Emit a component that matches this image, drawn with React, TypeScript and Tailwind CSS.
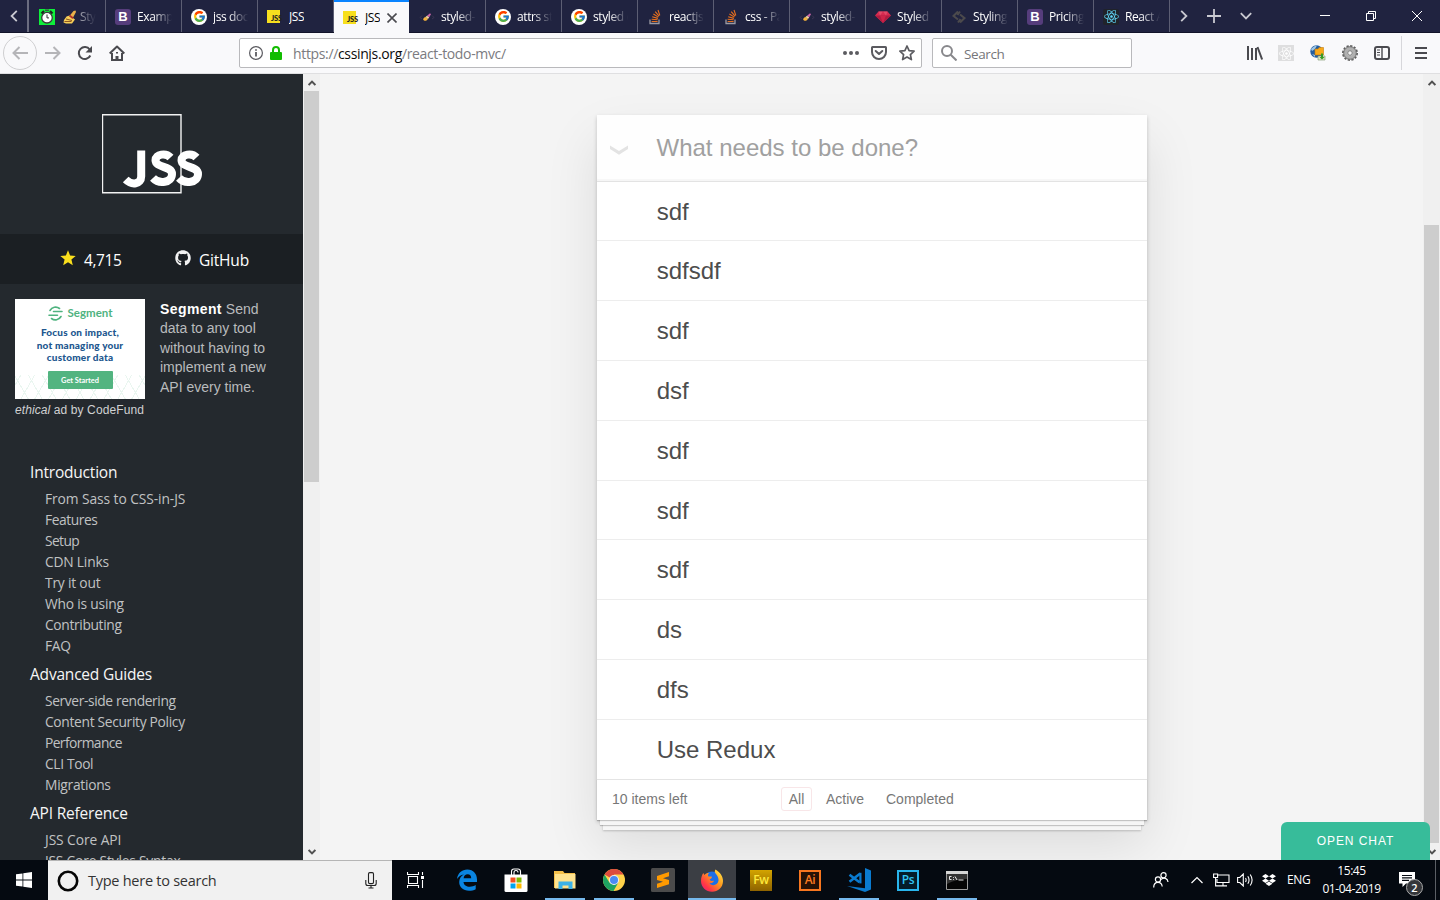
import type { ReactNode } from "react";
import { FaDropbox, FaGithub, FaReact } from "react-icons/fa";
import { FcGoogle } from "react-icons/fc";

const SEGOE = "font-['Open_Sans','Noto_Sans',sans-serif]";
const ARIAL = "font-['Liberation_Sans',Arial,sans-serif]";

/* ---------- favicons ---------- */

const Bootstrap = () => (
  <span className="flex size-4 items-center justify-center rounded-[3px] bg-[#563d7c] font-['Liberation_Sans',sans-serif] text-[13px] font-bold leading-none text-white">
    B
  </span>
);

const Google = () => (
  <span className="flex size-4 items-center justify-center rounded-full bg-white">
    <FcGoogle size={13} />
  </span>
);

const JssIcon = () => (
  <span className="flex h-[13px] w-4 items-end">
    <span className="flex h-[13px] w-[13px] items-end bg-[#f7df1e] pl-[4px] font-['Lato','Liberation_Sans',sans-serif] text-[7.500px] font-black leading-[9px] tracking-[-0.200px] text-[#222]">
      JSS
    </span>
  </span>
);

const StackOverflow = () => (
  <svg width="16" height="16" viewBox="0 0 16 16" fill="none">
    <path d="M3 10.500V14.500H12V10.500" stroke="#9a9aa4" strokeWidth="1.300" />
    <path d="M4.600 12.500h6M4.600 10.300l6 .5M5.200 7.800l5.700 1.600M6.400 5l5 3.100M8.200 2.600l3.900 4.500M11 1l1.800 5.400" stroke="#e8701e" strokeWidth="1.100" />
  </svg>
);

const StyledComp = () => (
  <svg width="16" height="16" viewBox="0 0 16 16" fill="none">
    <path d="M3 6.500 1 8.500l2 1.500M13 6.500l2 2-2 1.500" stroke="#3a3550" strokeWidth="1" />
    <path d="M6.500 8l2.500 2-1.500 1.500c-1.300.6-3.300.2-3.300-1.200C4.200 9.300 5.500 8.300 6.500 8z" fill="#f3b33c" />
    <path d="M6.500 8l1.500-1.200 2.200 1.500L9 10z" fill="#f5d9a0" />
    <path d="M8 6.800 11 4.200l1 1-1.800 3.100z" fill="#c965a9" />
  </svg>
);

const Gem = () => (
  <svg width="16" height="16" viewBox="0 0 16 16">
    <path d="M3.500 2.500h9L16 6.500 8 14 0 6.500z" fill="#d72b50" />
    <path d="M0 6.500h16L8 14z" fill="#b01c40" />
    <path d="M5 6.500h6L8 14z" fill="#cf2449" />
    <path d="M3.500 2.500 5 6.500 8 2.500l3 4 1.500-4z" fill="#e04a68" />
  </svg>
);

const StylingIcon = () => (
  <svg width="16" height="16" viewBox="0 0 16 16" fill="none" stroke="#4c4a4c" strokeWidth="2">
    <path d="M7 2.500 2.500 7 7 10.500M9 5.500l4.500 3.500L9 13.500M9 2.500 6.500 6M9.500 10 7 13.500" />
  </svg>
);

const Clock = () => (
  <svg width="16" height="16" viewBox="0 0 16 16">
    <rect width="16" height="16" fill="#0ef03a" />
    <path d="M2.500 4.500 5 2M13.500 4.500 11 2" stroke="#222" strokeWidth="2.200" />
    <path d="M6 1.200h4" stroke="#444" strokeWidth="1.400" />
    <circle cx="8" cy="8.700" r="5.300" fill="#fff" stroke="#3b3b3b" strokeWidth="1.300" />
    <path d="M8 5.500v3.400h2" stroke="#333" fill="none" />
  </svg>
);

const Brush = () => (
  <svg width="14" height="14" viewBox="0 0 14 14">
    <path d="M6 6.500 10.500 1 12.500.5 13 2 9.500 8.500z" fill="#e9b04a" />
    <path d="M6.500 5.500 3.500 6.500 1 10l-.5 2.500 2.500 1h6L12 9.500 10 8z" fill="#f7cf58" />
    <path d="M1.500 11.500h7M3 9l6 1.500" stroke="#8d5720" />
    <path d="M6.500 5.500 10 8.300" stroke="#b0302a" strokeWidth="1.800" />
  </svg>
);

const ReactFav = () => (
  <span className="flex size-4 items-center justify-center rounded-[2px] bg-[#20232a]">
    <FaReact size={15} color="#61dafb" />
  </span>
);

type TabInfo = { icon: ReactNode; title: string; active?: boolean; fade?: boolean };

const tabs: TabInfo[] = [
  { icon: <Clock />, title: "Styled", fade: true },
  { icon: <Bootstrap />, title: "Examples", fade: true },
  { icon: <Google />, title: "jss docs", fade: true },
  { icon: <JssIcon />, title: "JSS" },
  { icon: <JssIcon />, title: "JSS", active: true },
  { icon: <StyledComp />, title: "styled-c", fade: true },
  { icon: <Google />, title: "attrs sty", fade: true },
  { icon: <Google />, title: "styled c", fade: true },
  { icon: <StackOverflow />, title: "reactjs -", fade: true },
  { icon: <StackOverflow />, title: "css - Pa", fade: true },
  { icon: <StyledComp />, title: "styled-c", fade: true },
  { icon: <Gem />, title: "Styled C", fade: true },
  { icon: <StylingIcon />, title: "Styling", fade: true },
  { icon: <Bootstrap />, title: "Pricing", fade: true },
  { icon: <ReactFav />, title: "React Ap", fade: true },
];

function TabStrip() {
  return (
    <div className="flex h-[33px] shrink-0 border-b border-[#12142a] bg-[#202340]">
      <div className="flex w-[28px] shrink-0 items-center justify-center border-r border-[#6b6d80]">
        <svg width="8" height="12" viewBox="0 0 8 12" fill="none" stroke="#c9c9d1" strokeWidth="1.800">
          <path d="M6.800.8 1.600 6l5.200 5.200" />
        </svg>
      </div>
      <div className="flex w-[1142px] shrink-0 border-l border-[#6b6d80] pl-px">
        {tabs.map((t, i) => (
          <div
            key={i}
            className={
              t.active
                ? "flex h-[33px] w-[75px] shrink-0 items-center border-t-2 border-t-[#0a84ff] bg-[#f9f9fb] pl-[9px] text-black"
                : i === 5
                  ? "flex w-[77px] shrink-0 items-center border-r border-[#5c5e73] pl-[10px] pt-px text-white"
                  : "flex w-[76px] shrink-0 items-center border-r border-[#5c5e73] pl-[9px] pt-px text-white"
            }
          >
            <span className="flex size-4 shrink-0 items-center">{t.icon}</span>
            {i === 0 && (
              <span className="ml-2 shrink-0">
                <Brush />
              </span>
            )}
            <span
              className={
                (i === 0
                  ? "ml-[3px] w-4 [mask-image:linear-gradient(to_right,#0009,transparent)] "
                  : t.fade
                    ? "ml-[6px] w-[35px] [mask-image:linear-gradient(to_right,black_45%,transparent)] "
                    : "ml-[6px] ") + "overflow-hidden whitespace-nowrap pt-px text-[12px] leading-4 tracking-[-0.400px]"
              }
            >
              {t.title}
            </span>
            {t.active && (
              <svg className="ml-[7px] shrink-0" width="10" height="10" viewBox="0 0 10 10" stroke="#4a4a4f" strokeWidth="1.600">
                <path d="M.5.500l9 9M9.500.500l-9 9" />
              </svg>
            )}
          </div>
        ))}
      </div>
      <div className="flex flex-1 items-center text-[#c9c9d1]">
        <svg className="ml-[10px]" width="8" height="12" viewBox="0 0 8 12" fill="none" stroke="currentColor" strokeWidth="1.800">
          <path d="M1.200.8 6.400 6l-5.200 5.200" />
        </svg>
        <svg className="ml-[19px]" width="14" height="14" viewBox="0 0 14 14" stroke="currentColor" strokeWidth="1.800">
          <path d="M7 0v14M0 7h14" />
        </svg>
        <svg className="ml-[19px]" width="12" height="8" viewBox="0 0 12 8" fill="none" stroke="currentColor" strokeWidth="1.800">
          <path d="M.8 1.200 6 6.400l5.200-5.200" />
        </svg>
        <svg className="ml-[68px]" width="10" height="10" viewBox="0 0 10 10" stroke="#fff">
          <path d="M0 4.500h10" />
        </svg>
        <svg className="ml-[36px]" width="10" height="10" viewBox="0 0 10 10" fill="none" stroke="#fff">
          <path d="M.5 2.500h7v7h-7zM2.500 2.500v-2h7v7h-2" />
        </svg>
        <svg className="ml-[36px]" width="10" height="10" viewBox="0 0 10 10" stroke="#fff">
          <path d="M0 0l10 10M10 0 0 10" />
        </svg>
      </div>
    </div>
  );
}

function Toolbar() {
  return (
    <div className="flex h-[41px] shrink-0 items-center border-b border-[#dfdfe1] bg-[#f9f9fb] text-[#4a4a4f]">
      <div className="ml-[3px] flex size-[34px] items-center justify-center rounded-full border border-[#cfcfd1] text-[#b5b5b8]">
        <svg width="16" height="14" viewBox="0 0 16 14" fill="none" stroke="currentColor" strokeWidth="2">
          <path d="M7.500 1 1.500 7l6 6M1.500 7H16" />
        </svg>
      </div>
      <svg className="ml-[8px] text-[#b5b5b8]" width="16" height="14" viewBox="0 0 16 14" fill="none" stroke="currentColor" strokeWidth="2">
        <path d="M8.500 1l6 6-6 6M14.500 7H0" />
      </svg>
      <svg className="ml-[16px]" width="16" height="16" viewBox="0 0 16 16" fill="none" stroke="currentColor" strokeWidth="2">
        <path d="M12.700 4.500A6 6 0 1 0 13.300 10.500" />
        <path d="M15 1v6.500H8.500z" fill="currentColor" stroke="none" />
      </svg>
      <svg className="ml-[16px]" width="16" height="16" viewBox="0 0 16 16" fill="none" stroke="currentColor" strokeWidth="2">
        <path d="M.7 8.500 8 1.500l7.300 7" strokeLinejoin="round" />
        <path d="M3 8v7h10V8" />
        <path d="M6.500 15.500v-4.500h3v4.500zM7 7h2v1.500H7z" fill="currentColor" stroke="none" />
      </svg>
      <div className="ml-[114px] flex h-[30px] w-[683px] items-center rounded-[2px] border border-[#b9b9bc] bg-white">
        <svg className="ml-[9px]" width="14" height="14" viewBox="0 0 14 14" fill="none" stroke="#5b5b60" strokeWidth="1.200">
          <circle cx="7" cy="7" r="6.400" />
          <path d="M7 6v4.500M7 3.200v1.600" strokeWidth="1.800" />
        </svg>
        <svg className="ml-[7px]" width="12" height="14" viewBox="0 0 12 14">
          <rect y="6" width="12" height="8" rx="1" fill="#12bc00" />
          <path d="M3 7V4a3 3 0 0 1 6 0v3" fill="none" stroke="#12bc00" strokeWidth="2" />
        </svg>
        <span className="ml-[11px] w-[549px] pt-[2px] text-[14px] leading-5 tracking-[-0.350px] text-[#7b7b80]">
          https://<span className="text-[#0c0c0d]">cssinjs.org</span>/react-todo-mvc/
        </span>
        <svg className="ml-px" width="16" height="4" viewBox="0 0 16 4" fill="#5b5b60">
          <circle cx="2" cy="2" r="2" />
          <circle cx="8" cy="2" r="2" />
          <circle cx="14" cy="2" r="2" />
        </svg>
        <svg className="ml-[12px]" width="16" height="14" viewBox="0 0 16 14" fill="none" stroke="#5b5b60" strokeWidth="2" strokeLinecap="round" strokeLinejoin="round">
          <path d="M1.500 1h13q.5 0 .5.500V6A7 7 0 0 1 1 6V1.500Q1 1 1.500 1z" />
          <path d="M4.700 5 8 8l3.300-3" />
        </svg>
        <svg className="ml-[12px]" width="16" height="16" viewBox="0 0 16 16" fill="none" stroke="#5b5b60" strokeWidth="1.700" strokeLinejoin="round">
          <path d="M8 1l2.100 4.600 5 .6-3.700 3.400 1 5L8 12.100l-4.400 2.500 1-5L.9 6.200l5-.6z" />
        </svg>
      </div>
      <div className="ml-[10px] flex h-[30px] w-[200px] items-center rounded-[2px] border border-[#b9b9bc] bg-white">
        <svg className="ml-[8px]" width="16" height="16" viewBox="0 0 16 16" fill="none" stroke="#88888c" strokeWidth="2">
          <circle cx="6" cy="6" r="5" />
          <path d="M9.700 9.700 15.500 15.500" />
        </svg>
        <span className="ml-[7px] pt-[2px] text-[13.500px] leading-5 tracking-[-0.400px] text-[#76767a]">Search</span>
      </div>
      <svg className="ml-[115px]" width="16" height="14" viewBox="0 0 16 14" stroke="currentColor" strokeWidth="2">
        <path d="M1 0v14M5 2v12M9 2v12M10.500 1l4.600 12.500" fill="none" />
      </svg>
      <span className="ml-[15px] flex size-4 items-center justify-center bg-[#dededf]">
        <FaReact size={15} color="#fff" />
      </span>
      <svg className="ml-[16px]" width="16" height="16" viewBox="0 0 16 16">
        <circle cx="6.500" cy="6.500" r="6.200" fill="#245d9f" />
        <path d="M1 4q4-4 6-3.500L5 4 2 6zM2 9l3 1v2z" fill="#9cc7e8" />
        <path d="M5 4h3l1-1.500h4.500V10H5z" fill="#f8a91a" stroke="#c67e0c" strokeWidth=".6" />
        <path d="M8 11h7v4H8z" fill="#dfe8c8" stroke="#78906a" strokeWidth=".6" />
        <path d="M11 8.500h2V12h1.500L12 14.500 9.500 12H11z" fill="#379b24" />
      </svg>
      <svg className="ml-[16px]" width="16" height="16" viewBox="0 0 16 16" fill="none">
        <circle cx="8" cy="8" r="7" stroke="#5e5e5e" strokeWidth="2" strokeDasharray="2.200 1.460" />
        <circle cx="8" cy="8" r="4.600" stroke="#b0b0b0" strokeWidth="4" />
        <circle cx="8" cy="8" r="6.300" stroke="#666" strokeWidth=".8" />
        <circle cx="8" cy="8" r="2.300" stroke="#777" fill="#f4f4f4" />
      </svg>
      <svg className="ml-[16px]" width="16" height="14" viewBox="0 0 16 14" fill="none" stroke="currentColor" strokeWidth="2">
        <rect x="1" y="1" width="14" height="12" rx="2" />
        <path d="M8 1v12" strokeWidth="1.400" />
        <path d="M3 4h3M3 6.500h3M3 9h3" strokeWidth="1" />
      </svg>
      <div className="ml-[11px] h-[34px] w-px bg-[#d7d7db]" />
      <svg className="ml-[13px]" width="12" height="12" viewBox="0 0 12 12" stroke="currentColor" strokeWidth="2">
        <path d="M0 1h12M0 6h12M0 11h12" />
      </svg>
    </div>
  );
}

/* ---------- page ---------- */

const Arrow = ({ up = false }: { up?: boolean }) => (
  <svg className={up ? "" : "rotate-180"} width="8" height="6" viewBox="0 0 8 6" fill="none" stroke="#505050" strokeWidth="2">
    <path d="M.6 5 4 1.600 7.400 5" />
  </svg>
);

const WIDE = "tracking-[-0.080px]";
const TIGHT = "tracking-[-0.350px]";
const TIGHTER = "tracking-[-0.600px]";

const nav = [
  {
    title: "Introduction",
    items: [
      ["From Sass to CSS-in-JS", WIDE],
      ["Features", "tracking-[-0.420px]"],
      ["Setup", TIGHTER],
      ["CDN Links", "tracking-[-0.200px]"],
      ["Try it out", "tracking-[-0.200px]"],
      ["Who is using", "tracking-[-0.200px]"],
      ["Contributing", TIGHT],
      ["FAQ", TIGHT],
    ],
  },
  {
    title: "Advanced Guides",
    items: [
      ["Server-side rendering", "tracking-[-0.380px]"],
      ["Content Security Policy", "tracking-[-0.320px]"],
      ["Performance", TIGHTER],
      ["CLI Tool", TIGHT],
      ["Migrations", "tracking-[-0.280px]"],
    ],
  },
  {
    title: "API Reference",
    items: [
      ["JSS Core API", WIDE],
      ["JSS Core Styles Syntax", "tracking-[-0.200px]"],
    ],
  },
];

function SegmentAd() {
  return (
    <div className="flex h-[100px] w-[130px] flex-col items-center overflow-hidden bg-white bg-[repeating-linear-gradient(60deg,transparent_0_11px,#eaf6f0_11px_12px),repeating-linear-gradient(-60deg,transparent_0_11px,#eaf6f0_11px_12px)] bg-[length:100%_24px] bg-bottom bg-no-repeat">
      <div className="mt-[6px] flex h-4 items-center gap-[5px]">
        <svg width="15" height="15" viewBox="0 0 15 15" fill="none" stroke="#4fb37f" strokeWidth="1.600" strokeLinecap="round">
          <path d="M2 4.500A6.400 6.400 0 0 1 11.500 2.500M13 10.500A6.400 6.400 0 0 1 3.500 12.500M5.500 5.500h8.500M1 9.300h8.500" />
        </svg>
        <span className="font-['Lato',sans-serif] text-[11.500px] font-bold leading-4 text-[#4fb37f]">Segment</span>
      </div>
      <div className="mt-[5px] text-center font-['Lato',sans-serif] text-[10px] font-black leading-[12.500px] tracking-[0.200px] text-[#22578f]">
        <div>Focus on impact,</div>
        <div>not managing your</div>
        <div>customer data</div>
      </div>
      <div className="mt-[7.500px] flex h-[18px] w-[65px] items-center justify-center rounded-[1px] bg-[#52b480] pt-px font-['Lato',sans-serif] text-[7.400px] font-bold text-white">
        Get Started
      </div>
    </div>
  );
}

function Sidebar() {
  return (
    <div className="flex w-[303px] shrink-0 flex-col overflow-hidden bg-[#24292e]">
      <div className="flex h-[160px] shrink-0 pl-[102px] pt-[40px]">
        <svg width="102" height="80" viewBox="0 0 102 80">
          <path d="M.5.800h78.500v78H.5z" fill="none" stroke="#f2f2f2" strokeWidth="1.400" />
          <g fill="none" stroke="#fff" strokeWidth="8">
            <path d="M39.200 36.500v26c0 8-9.500 9-15.500 3" />
            <path d="M68.500 43.500c-4.500-5-15-3.500-15 2.800 0 7.700 16.500 5.500 16.500 13.700 0 9-13 10.500-19 4" />
            <path d="M94.500 43.500c-4.500-5-15-3.500-15 2.800 0 7.700 16.500 5.500 16.500 13.700 0 9-13 10.500-19 4" />
          </g>
        </svg>
      </div>
      <div className={`flex h-[50px] shrink-0 items-center bg-[#1b1f23] pl-[60px] text-[15.500px] text-white ${SEGOE}`}>
        <svg className="mb-[3px]" width="16" height="16" viewBox="0 0 16 16" fill="#fadf1d">
          <path d="M8 .3l2.100 5.100 5.600.5-4.300 3.600 1.400 5.700L8 12.200l-4.800 3 1.400-5.700L.3 5.900l5.600-.5z" />
        </svg>
        <span className="ml-2 mt-[4px] w-[91px] tracking-[-0.400px]">4,715</span>
        <FaGithub className="mb-[3px]" size={16} color="#f2f2f2" />
        <span className="ml-2 mt-[4px] tracking-[-0.200px]">GitHub</span>
      </div>
      <div className={`flex shrink-0 pl-[15px] pt-[15px] ${ARIAL}`}>
        <div className="w-[145px]">
          <SegmentAd />
          <div className="mt-[3px] whitespace-nowrap text-[12px] leading-4 tracking-[0.100px] text-[#d0d1d2]">
            <em>ethical</em> ad by CodeFund
          </div>
        </div>
        <div className="w-[115px] pt-[0.700px] text-[14px] leading-[19.600px] text-[#b9bbbd]">
          <b className="tracking-[0.400px] text-white">Segment</b> Send data to any tool without having to implement a new API every time.
        </div>
      </div>
      <div className={`mt-[37px] flex flex-col pl-[30px] ${SEGOE}`}>
        {nav.map((s) => (
          <div key={s.title} className="shrink-0">
            <div className="h-[34px] text-[15.500px] leading-[34px] tracking-[-0.200px] text-[#f6f6f6]">{s.title}</div>
            <div className="pl-[15px]">
              {s.items.map(([label, tracking]) => (
                <div key={label} className={`h-[21px] whitespace-nowrap text-[13.800px] leading-[19px] text-[#c0c2c3] ${tracking}`}>
                  {label}
                </div>
              ))}
            </div>
          </div>
        ))}
      </div>
    </div>
  );
}

const todos = [
  { text: "sdf", row: "h-[59px] border-b pt-[2px]" },
  { text: "sdfsdf", row: "h-[60px] border-b" },
  { text: "sdf", row: "h-[60px] border-b" },
  { text: "dsf", row: "h-[60px] border-b" },
  { text: "sdf", row: "h-[60px] border-b" },
  { text: "sdf", row: "h-[59px] border-b pt-[2px]" },
  { text: "sdf", row: "h-[60px] border-b" },
  { text: "ds", row: "h-[60px] border-b" },
  { text: "dfs", row: "h-[60px] border-b" },
  { text: "Use Redux", row: "h-[59px]" },
];

function TodoApp() {
  return (
    <div className="h-[705px] w-[550px] bg-white shadow-[0_2px_4px_rgba(0,0,0,0.2),0_25px_50px_rgba(0,0,0,0.1)]">
      <div className="flex h-[66px] items-center bg-[#fefefe] pl-[13px] shadow-[inset_0_-2px_1px_rgba(0,0,0,0.03)]">
        <svg className="mt-[3px]" width="18" height="10" viewBox="0 0 18 10" fill="#e3e3e3">
          <path d="M0 .5 9 6 18 .5V4L9 9.800 0 4z" />
        </svg>
        <span className="ml-[28.500px] text-[24px] leading-7 text-[#a0a0a0]">What needs to be done?</span>
      </div>
      <div className="border-t border-[#e3e3e3]">
        {todos.map((t, i) => (
          <div key={i} className={`flex items-center border-[#ededed] pl-[59.700px] text-[24px] leading-7 text-[#4d4d4d] ${t.row}`}>
            {t.text}
          </div>
        ))}
      </div>
      <div className="flex h-[41px] items-center border-t border-[#e4e4e4] pb-[2px] pl-[15px] text-[14px] leading-4 text-[#777] shadow-[0_1px_1px_rgba(0,0,0,0.2),0_8px_0_-3px_#f6f6f6,0_9px_1px_-3px_rgba(0,0,0,0.2),0_16px_0_-6px_#f6f6f6,0_17px_2px_-6px_rgba(0,0,0,0.2)]">
        <span className="w-[169px]">10 items left</span>
        <span className="flex h-6 w-[31px] items-center justify-center rounded-[3px] border border-[#f8e6e8]">All</span>
        <span className="ml-[14px] w-[60px]">Active</span>
        <span>Completed</span>
      </div>
    </div>
  );
}

function Page() {
  return (
    <div className="relative flex min-h-0 flex-1 overflow-hidden bg-[#f4f4f4]">
      <Sidebar />
      <div className="flex w-[17px] shrink-0 flex-col items-center bg-[#f0f0f0]">
        <div className="flex h-[17px] items-center">
          <Arrow up />
        </div>
        <div className="h-[391px] w-[15px] bg-[#cdcdcd]" />
        <div className="mt-auto flex h-[17px] items-center">
          <Arrow />
        </div>
      </div>
      <div className={`flex flex-1 items-start overflow-hidden pl-[277px] pt-[41px] ${ARIAL}`}>
        <TodoApp />
      </div>
      <div className="flex w-[17px] shrink-0 flex-col items-center bg-[#f0f0f0]">
        <div className="flex h-[17px] items-center">
          <Arrow up />
        </div>
        <div className="mt-[134px] h-[618px] w-[15px] bg-[#cdcdcd]" />
        <div className="mt-auto flex h-[17px] items-center">
          <Arrow />
        </div>
      </div>
      <button className={`absolute bottom-0 right-[10px] h-[38px] w-[149px] rounded-t-[6px] bg-[#37bc9a] text-[12px] tracking-[0.950px] text-white ${ARIAL}`}>
        OPEN CHAT
      </button>
    </div>
  );
}

/* ---------- taskbar ---------- */

const TaskView = () => (
  <svg width="18" height="16" viewBox="0 0 18 16" fill="none" stroke="#fff" strokeWidth="1.100">
    <path d="M1.500 4.500h9v7h-9zM.500 0v2.500h11V0M.500 16v-2.500h11V16M15.500 0v3M15.500 8v8" />
    <path d="M14 4h3v3h-3z" fill="#fff" stroke="none" />
  </svg>
);

const Edge = () => (
  <svg width="22" height="22" viewBox="0 0 22 22">
    <path
      d="M1 10C1.800 4 6 .5 11.300.5 17.500.5 21 5 21 10.500V13H7.500c.2 3.200 3 4.700 6.200 4.700 2.500 0 4.300-.7 6-1.700v4.200c-1.900 1-4.200 1.500-6.700 1.500C7.200 21.700 3.200 18.300 3.200 13c0-3.500 1.800-6.200 4.700-7.600C4.700 5.900 2.500 7.500 1 10zM7.600 9.300h7.600c0-2.600-1.300-4-3.500-4-2.300 0-3.800 1.600-4.100 4z"
      fill="#0a84e0"
    />
  </svg>
);

const Store = () => (
  <svg width="24" height="24" viewBox="0 0 24 24">
    <path d="M7.500 7V3.500A2.500 2.500 0 0 1 10 1h4A2.500 2.500 0 0 1 16.500 3.500V7M10 7V4.500a2 2 0 0 1 4 0" fill="none" stroke="#fff" strokeWidth="1.100" />
    <path d="M.5 6.500h23V22.500a1.500 1.500 0 0 1-1.500 1.500h-20A1.500 1.500 0 0 1 .5 22.500z" fill="#fff" />
    <path d="M6.500 9.500h5v5h-5z" fill="#f25022" />
    <path d="M12.500 9.500h5v5h-5z" fill="#7fba00" />
    <path d="M6.500 15.500h5v5h-5z" fill="#00a4ef" />
    <path d="M12.500 15.500h5v5h-5z" fill="#ffb900" />
  </svg>
);

const Explorer = () => (
  <svg width="22" height="18" viewBox="0 0 22 18">
    <path d="M0 0h9l1.500 2H21v15H0z" fill="#f5c04a" />
    <path d="M1 3h20.500v14.500H1z" fill="#ffe38f" />
    <path d="M4.500 18v-7.500h14V18h-4v-3.500h-6V18z" fill="#3db2e8" />
  </svg>
);

const Chrome = () => (
  <svg width="22" height="22" viewBox="0 0 22 22">
    <circle cx="11" cy="11" r="11" fill="#ffd24a" />
    <path d="M11 11 1.500 5.500A11 11 0 0 1 20.500 5.500H11z" fill="#dd4b3e" />
    <path d="M1.500 5.500A11 11 0 0 0 10.500 22l4.700-8.200L11 11 6.500 13.800z" fill="#1da362" />
    <circle cx="11" cy="11" r="5" fill="#f1f1f1" />
    <circle cx="11" cy="11" r="4" fill="#4a8af4" />
  </svg>
);

const Sublime = () => (
  <svg width="24" height="24" viewBox="0 0 24 24">
    <rect width="24" height="24" rx="1.500" fill="#4b4b4b" />
    <path d="M18 4v4.200l-6 2 6 1.800v4.200L6 20v-4.200l6-2-6-1.800V8z" fill="#ff9a00" />
  </svg>
);

const Firefox = () => (
  <svg width="22" height="23" viewBox="0 0 22 23">
    <defs>
      <linearGradient id="ff" x1="1" y1="0" x2="0" y2="1">
        <stop offset="0" stopColor="#fff44f" />
        <stop offset=".4" stopColor="#ff9a1e" />
        <stop offset=".75" stopColor="#ff3647" />
        <stop offset="1" stopColor="#e31587" />
      </linearGradient>
    </defs>
    <circle cx="11" cy="11" r="8.500" fill="#1c6fe6" />
    <path
      d="M14.500.5c5 3 7.500 7 7.500 11.500C22 18.500 17 22.800 11 22.800S0 18 0 12c0-3.500 1-6 2.300-8L3.500 6C4.500 4.500 6 4 8 4 6.800 5.200 6.700 6.500 7.500 7.500h3.200c.5 1-.2 2-2 2.800.2 1 1 1.700 2 1.700l2.300-.2c-.7 1.700-2.500 2.700-4.500 2.200 1.500 3.500 8.500 2.700 9-2.500.3-3.500-2.500-6.500-3.500-8-.4-1-.2-2 .5-3z"
      fill="url(#ff)"
    />
  </svg>
);

const VsCode = () => (
  <svg width="24" height="24" viewBox="0 0 24 24">
    <path d="M18 0l6 2.500v19L18 24 0 18l18 2.200z" fill="#0a7bd0" />
    <path d="M2.500 6.800 12.500 14.200M2.500 13.800 13.300 5.500" stroke="#0a7bd0" strokeWidth="2.600" />
    <path d="M13.400 4.800v10.600" stroke="#0a7bd0" strokeWidth="2.200" />
  </svg>
);

const Cmd = () => (
  <svg width="22" height="19" viewBox="0 0 22 19">
    <path d="M.5.5h21v18H.5z" fill="#050505" stroke="#9b9b9b" />
    <path d="M0 0h22v3H0z" fill="#d5d5d5" />
    <path d="M1 3h20v5Q10 8 1 13z" fill="#333" />
    <path d="M5.500 5.500H3.500v3h2M7.500 6v.8M7.500 8v.8M9 5.500l2 3.500M12.500 9h5" fill="none" stroke="#fff" strokeWidth=".9" />
  </svg>
);

const Adobe = ({ label, tone }: { label: string; tone: string }) => (
  <span className={`flex h-[21px] w-[22px] items-center justify-center font-['Open_Sans',sans-serif] text-[12px] font-semibold leading-none tracking-[-0.300px] ${tone}`}>
    {label}
  </span>
);

const apps: { icon: ReactNode; state?: "open" | "active" }[] = [
  { icon: <TaskView /> },
  { icon: <Edge /> },
  { icon: <Store /> },
  { icon: <Explorer />, state: "open" },
  { icon: <Chrome />, state: "open" },
  { icon: <Sublime /> },
  { icon: <Firefox />, state: "active" },
  { icon: <Adobe label="Fw" tone="bg-gradient-to-b from-[#d3a400] to-[#8e6300] text-[#ffe83b]" /> },
  { icon: <Adobe label="Ai" tone="border-2 border-[#f7761f] bg-[#261206] text-[#ff7c20]" /> },
  { icon: <VsCode />, state: "open" },
  { icon: <Adobe label="Ps" tone="border-2 border-[#29b5ec] bg-[#041c29] text-[#31c5f4]" /> },
  { icon: <Cmd />, state: "open" },
];

function Taskbar() {
  return (
    <div className="flex h-[40px] shrink-0 bg-[#050a11] text-white">
      <div className="flex w-[48px] shrink-0 items-center justify-center">
        <svg width="16" height="16" viewBox="0 0 16 16" fill="#fff">
          <path d="M0 2.300 6.500 1.400v6.200H0zM7.300 1.300 16 0v7.600H7.300zM0 8.400h6.500v6.200L0 13.700zM7.300 8.400H16V16l-8.700-1.300z" />
        </svg>
      </div>
      <div className="flex w-[344px] shrink-0 items-center border-t border-[#b5b5b5] bg-[#f1f1f1] pl-[9px] text-[#333]">
        <svg width="22" height="22" viewBox="0 0 22 22" fill="none">
          <circle cx="11" cy="11" r="9.200" stroke="#060606" strokeWidth="2.600" />
        </svg>
        <span className="ml-[9px] w-[277px] text-[14.500px] tracking-[-0.260px]">Type here to search</span>
        <svg width="12" height="17" viewBox="0 0 12 17" fill="none" stroke="#222" strokeWidth="1.100">
          <rect x="3.500" y=".6" width="5" height="11" rx="1.300" />
          <path d="M.8 8v3.500q0 2 2 2h6.400q2 0 2-2V8M6 13.500V16M3.500 16h5" />
        </svg>
      </div>
      <div className="flex shrink-0">
        {apps.map((a, i) => (
          <div
            key={i}
            className={
              (i === 0 ? "" : i === 1 ? "ml-[3px] " : "ml-px ") +
              (a.state === "active"
                ? "flex w-[48px] flex-col items-center bg-[#3b3e44]"
                : "flex w-[48px] flex-col items-center")
            }
          >
            <div className={i === 0 ? "flex h-[38px] items-center pt-px" : "flex h-[38px] items-center pt-[2px]"}>{a.icon}</div>
            {a.state && <div className={a.state === "active" ? "h-[2px] w-full bg-[#76b9ed]" : "h-[2px] w-[40px] bg-[#76b9ed]"} />}
          </div>
        ))}
      </div>
      <div className="flex flex-1 items-center">
        <svg className="ml-[172px]" width="16" height="16" viewBox="0 0 16 16" fill="none" stroke="#fff" strokeWidth="1.200">
          <circle cx="5" cy="7.500" r="2.600" />
          <path d="M.7 15.500c0-3.200 1.800-5.200 4.300-5.200s4 2 4.200 4.200" />
          <circle cx="10.500" cy="3.200" r="2.600" />
          <path d="M8 7.500c2.800-2.800 6.800-1 7 2.500" />
        </svg>
        <svg className="ml-[22px]" width="12" height="8" viewBox="0 0 12 8" fill="none" stroke="#fff" strokeWidth="1.200">
          <path d="M.5 7 6 1.500 11.500 7" />
        </svg>
        <svg className="ml-[10px]" width="17" height="14" viewBox="0 0 17 14" fill="none" stroke="#fff" strokeWidth="1.100">
          <path d="M5 2h11v7.500H4V6M10 9.500v3M6 12.900h8M.6 1h4v3.500h-4zM2.600 4.500v8.400H6" />
        </svg>
        <svg className="ml-[7px]" width="17" height="14" viewBox="0 0 17 14" fill="none" stroke="#fff" strokeWidth="1.100">
          <path d="M.6 4.500h2.200L6.300 1v12L2.800 9.500H.6zM8.500 5q1.300 2 0 4M10.800 3.300q2.500 3.700 0 7.400M13.200 1.500q3.800 5.500 0 11" />
        </svg>
        <FaDropbox className="ml-[8px]" size={14} />
        <span className="ml-[11px] w-[27px] whitespace-nowrap text-[12px] tracking-[-0.400px]">ENG</span>
        <div className="ml-[5px] flex w-[65px] flex-col items-center whitespace-nowrap text-[12px] leading-[18px] tracking-[-0.450px]">
          <span>15:45</span>
          <span>01-04-2019</span>
        </div>
        <div className="relative ml-[15px] size-4">
          <svg width="16" height="16" viewBox="0 0 16 16">
            <path d="M0 0h16v11.500H7L3.500 15v-3.500H0z" fill="#fff" />
            <path d="M3 3.500h10M3 5.900h10M3 8.300h7" stroke="#050a11" strokeWidth="1.200" />
          </svg>
          <span className="absolute left-[7px] top-[7px] flex size-[17px] items-center justify-center rounded-full border border-[#aaa] bg-[#34363a] text-[11px] font-semibold leading-none">
            2
          </span>
        </div>
        <div className="ml-auto mr-[4px] h-full w-px bg-[#5b5f65]" />
      </div>
    </div>
  );
}

export default function App() {
  return (
    <div className={`flex h-[900px] w-[1440px] flex-col overflow-hidden ${SEGOE}`}>
      <TabStrip />
      <Toolbar />
      <Page />
      <Taskbar />
    </div>
  );
}
